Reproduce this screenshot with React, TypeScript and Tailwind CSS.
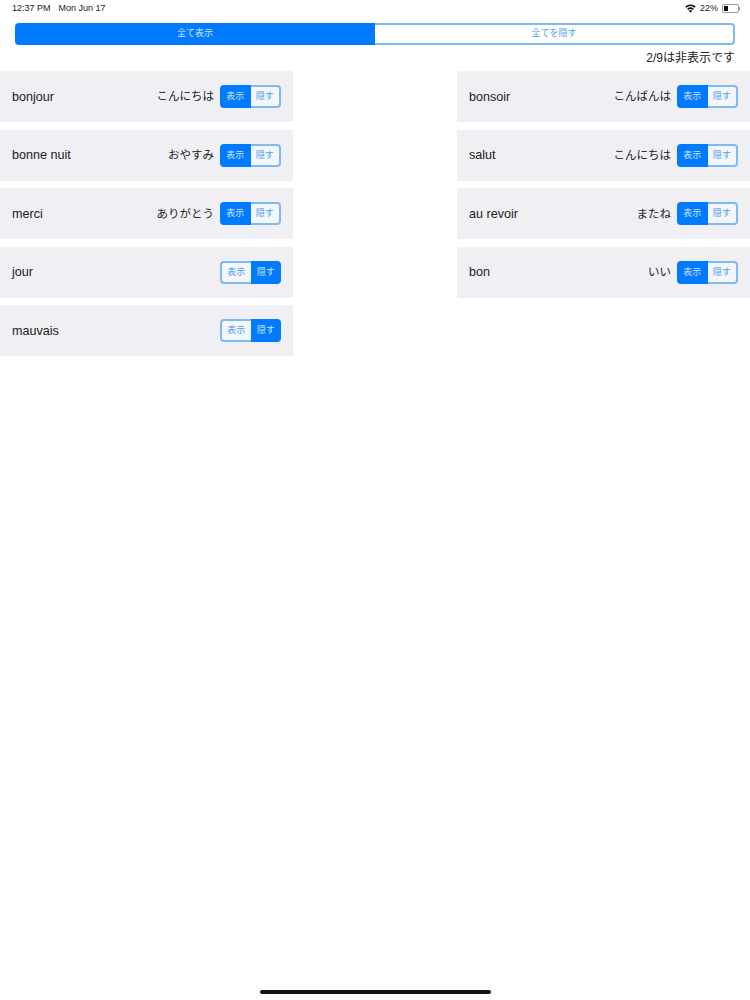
const FONT = "font-['Liberation_Sans','Noto_Sans_CJK_JP',sans-serif]"

type Word = { fr: string; ja: string; hidden?: boolean }

const left: Word[] = [
  { fr: 'bonjour', ja: 'こんにちは' },
  { fr: 'bonne nuit', ja: 'おやすみ' },
  { fr: 'merci', ja: 'ありがとう' },
  { fr: 'jour', ja: '', hidden: true },
  { fr: 'mauvais', ja: '', hidden: true },
]

const right: Word[] = [
  { fr: 'bonsoir', ja: 'こんばんは' },
  { fr: 'salut', ja: 'こんにちは' },
  { fr: 'au revoir', ja: 'またね' },
  { fr: 'bon', ja: 'いい' },
]

const ON = 'bg-[#007aff] text-[#cfe5ff]'
const OFF = 'border-2 border-[#7fb8f3] bg-[#f3f6fb] text-[#4d9df0]'

function Toggle({ hidden }: { hidden?: boolean }) {
  return (
    <div className="flex h-[23px] w-[61px] shrink-0 text-[9px] leading-none">
      <div className={`flex w-1/2 items-center justify-center rounded-l-[4px] ${hidden ? `${OFF} border-r-0` : ON}`}>表示</div>
      <div className={`flex w-1/2 items-center justify-center rounded-r-[4px] ${hidden ? ON : `${OFF} border-l-0`}`}>隠す</div>
    </div>
  )
}

function Row({ word }: { word: Word }) {
  return (
    <div className="flex h-[51px] items-center bg-[#efeff4] px-3">
      <span className="flex-1 pt-[1px] text-[12.6px] text-[#222]">{word.fr}</span>
      <span className="mr-[6px] pt-[1px] text-[11.5px] text-[#222]">{word.ja}</span>
      <Toggle hidden={word.hidden} />
    </div>
  )
}

export default function App() {
  return (
    <div className={`relative h-[1000px] w-[750px] overflow-hidden bg-white ${FONT}`}>
      {/* status bar */}
      <div className="flex h-[23px] items-center justify-between pb-[6px] pl-3 pr-[10px] text-[9px] text-[#222]">
        <div className="flex gap-2">
          <span>12:37 PM</span>
          <span>Mon Jun 17</span>
        </div>
        <div className="flex items-center gap-1">
          <svg width="11" height="9" viewBox="0 0 24 18" fill="#111">
            <path d="M12 18l-3.6-4.2a5.5 5.5 0 0 1 7.2 0z" />
            <path d="M6.9 12l-2.3-2.7a11.5 11.5 0 0 1 14.8 0L17.1 12a8 8 0 0 0-10.2 0z" />
            <path d="M3.1 7.6L.6 4.7a17.5 17.5 0 0 1 22.8 0l-2.5 2.9a13.6 13.6 0 0 0-17.8 0z" />
          </svg>
          <span>22%</span>
          <div className="flex items-center">
            <div className="h-[9px] w-[17px] rounded-[2px] border border-[#999] p-[1px]">
              <div className="h-full w-[4px] bg-[#111]" />
            </div>
            <div className="h-[3px] w-[1px] bg-[#999]" />
          </div>
        </div>
      </div>

      {/* show all / hide all */}
      <div className="mx-[15px] flex h-[22px] text-[9px]">
        <div className="flex w-1/2 items-center justify-center rounded-l-[4px] bg-[#007aff] text-[#cfe5ff]">全て表示</div>
        <div className="flex w-1/2 items-center justify-center rounded-r-[4px] border-2 border-l-0 border-[#7fb8f3] text-[#4d9df0]">全てを隠す</div>
      </div>

      <div className="mr-[15px] flex h-[26px] items-center justify-end text-[12px] text-[#222]">2/9は非表示です</div>

      <div className="flex items-start justify-between">
        <div className="flex w-[293px] flex-col gap-[7.6px]">
          {left.map(w => <Row key={w.fr} word={w} />)}
        </div>
        <div className="flex w-[293px] flex-col gap-[7.6px]">
          {right.map(w => <Row key={w.fr} word={w} />)}
        </div>
      </div>

      {/* home indicator */}
      <div className="absolute bottom-[6px] left-[260px] h-[4px] w-[231px] rounded-full bg-[#111]" />
    </div>
  )
}
